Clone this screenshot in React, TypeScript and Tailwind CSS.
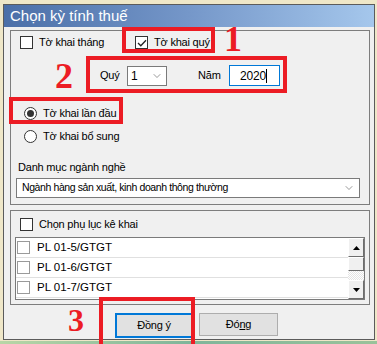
import { ChevronDown } from 'lucide-react';

const font = { fontFamily: '"Liberation Sans", Arial, sans-serif' };
const serif = { fontFamily: '"Liberation Serif", "Times New Roman", serif' };

function CheckBox({ checked = false, soft = false }: { checked?: boolean; soft?: boolean }) {
  return (
    <span
      className={`flex h-[13px] w-[13px] shrink-0 items-center justify-center bg-white border ${
        soft ? 'border-[#9a9a9a]' : 'border-[#333333]'
      }`}
    >
      {checked && (
        <svg width="10" height="8" viewBox="0 0 10 8">
          <path d="M1 4 L3.8 6.8 L9 1.2" fill="none" stroke="#222" strokeWidth="1.3" />
        </svg>
      )}
    </span>
  );
}

function Radio({ checked = false }: { checked?: boolean }) {
  return (
    <span className="flex h-[13px] w-[13px] shrink-0 items-center justify-center rounded-full border border-[#333333] bg-white">
      {checked && <span className="h-[7px] w-[7px] rounded-full bg-[#333333]" />}
    </span>
  );
}

function ScrollBtn({ up }: { up?: boolean }) {
  return (
    <div className="flex h-[19px] w-[16px] items-center justify-center border border-t-white border-l-white border-r-[#6d6d6d] border-b-[#6d6d6d] bg-[#f0f0f0]">
      <svg width="7" height="4" viewBox="0 0 7 4">
        <path d={up ? 'M0 4 L3.5 0 L7 4 Z' : 'M0 0 L3.5 4 L7 0 Z'} fill="#000" />
      </svg>
    </div>
  );
}

const rows = ['PL 01-5/GTGT', 'PL 01-6/GTGT', 'PL 01-7/GTGT'];

export default function App() {
  return (
    <div className="relative flex h-[344px] w-[377px] flex-col overflow-hidden bg-[#efe7c8] text-[11px] tracking-[-0.2px] text-black" style={font}>
      <div className="ml-[3px] mt-[4px] flex h-[337px] w-[372px] flex-col border border-[#5b5b5b] bg-[#f0f0f0]">
        {/* title */}
        <div className="flex h-[22px] items-center bg-gradient-to-r from-[#4b6fa8] via-[#7597c9] to-[#a5c7ec] pl-[6px] text-[15px] tracking-normal text-white">
          Chọn kỳ tính thuế
        </div>

        {/* group 1 */}
        <div className="ml-[6px] mt-[3px] flex h-[175px] w-[360px] flex-col border border-[#7d7d7d]">
          <div className="mt-[5px] flex h-[13px] items-center pl-[9px]">
            <div className="flex w-[115px] items-center gap-[6px]">
              <CheckBox />
              <span>Tờ khai tháng</span>
            </div>
            <div className="flex items-center gap-[6px]">
              <CheckBox checked />
              <span>Tờ khai quý</span>
            </div>
          </div>

          <div className="mt-[16px] flex h-[21px] items-center pl-[89px]">
            <span className="w-[27px]">Quý</span>
            <div className="flex h-[20px] w-[40px] items-center justify-between border border-[#7a7a7a] bg-white pl-[3px] pr-[3px]">
              <span className="text-[12px]">1</span>
              <ChevronDown size={12} strokeWidth={1.2} color="#555" />
            </div>
            <span className="ml-[31px] w-[31px]">Năm</span>
            <div className="flex h-[21px] w-[51px] items-center justify-end border border-[#0078d7] bg-white pr-[12px] text-[12px]">
              2020<span className="h-[14px] w-px bg-black" />
            </div>
          </div>

          <div className="mt-[21px] flex h-[13px] items-center gap-[6px] pl-[13px]">
            <Radio checked />
            <span>Tờ khai lần đầu</span>
          </div>
          <div className="mt-[10px] flex h-[13px] items-center gap-[6px] pl-[13px]">
            <Radio />
            <span>Tờ khai bổ sung</span>
          </div>

          <div className="mt-[16px] h-[14px] pl-[7px]">Danh mục ngành nghề</div>
          <div className="ml-[5px] mt-[5px] flex h-[20px] w-[344px] items-center justify-between border border-[#7a7a7a] bg-white pl-[5px] pr-[4px]">
            <span className="text-[10.5px] tracking-[-0.4px]">Ngành hàng sản xuất, kinh doanh thông thường</span>
            <ChevronDown size={12} strokeWidth={1.2} color="#555" />
          </div>
        </div>

        {/* group 2 */}
        <div className="ml-[6px] mt-[5px] flex h-[95px] w-[360px] flex-col border border-[#7d7d7d]">
          <div className="mt-[7px] flex h-[13px] items-center gap-[6px] pl-[9px]">
            <CheckBox />
            <span>Chọn phụ lục kê khai</span>
          </div>
          <div className="ml-[4px] mt-[6px] flex h-[63px] w-[350px] border border-[#7a7a7a] bg-white">
            <div className="flex flex-1 flex-col">
              {rows.map((r) => (
                <div key={r} className="flex h-[20px] items-center gap-[7px] border-b border-[#e0e0e0] pl-[1px]">
                  <CheckBox soft />
                  <span className="text-[11.5px] tracking-normal">{r}</span>
                </div>
              ))}
            </div>
            <div className="flex w-[16px] flex-col">
              <ScrollBtn up />
              <div className="h-[14px] border border-t-white border-l-white border-r-[#6d6d6d] border-b-[#6d6d6d] bg-[#f0f0f0]" />
              <div
                className="flex-1"
                style={{
                  backgroundImage: 'repeating-conic-gradient(#e4e4e4 0% 25%, #ffffff 0% 50%)',
                  backgroundSize: '2px 2px',
                }}
              />
              <ScrollBtn />
            </div>
          </div>
        </div>

        {/* buttons */}
        <div className="mt-[8px] flex items-start pl-[111px]">
          <button className="flex h-[25px] w-[78px] items-center justify-center border border-[#0078d7] bg-[#e1e1e1] outline outline-1 -outline-offset-2 outline-[#0078d7]">
            Đồng ý
          </button>
          <button className="ml-[6px] flex h-[23px] w-[79px] items-center justify-center border border-[#adadad] bg-[#e1e1e1]">
            Đó<span className="underline">n</span>g
          </button>
        </div>
      </div>
      <div className="mt-[1px] h-[3px] w-full bg-gradient-to-r from-[#b9d6a6] via-[#7fb59a] to-[#9ac29a]" />

      {/* annotations */}
      <div className="absolute left-[122px] top-[27px] h-[26px] w-[93px] border-4 border-[#ec1c24]" />
      <div className="absolute left-[86px] top-[56px] h-[37px] w-[201px] border-4 border-[#ec1c24]" />
      <div className="absolute left-[9px] top-[97px] h-[27px] w-[114px] border-4 border-[#ec1c24]" />
      <div className="absolute left-[99px] top-[297px] h-[60px] w-[96px] border-4 border-[#ec1c24]" />
      <span className="absolute left-[224px] top-[21px] text-[36px] font-bold leading-none tracking-normal text-[#ec1c24]" style={serif}>1</span>
      <span className="absolute left-[55px] top-[58px] text-[36px] font-bold leading-none tracking-normal text-[#ec1c24]" style={serif}>2</span>
      <span className="absolute left-[68px] top-[304px] text-[32px] font-bold leading-none tracking-normal text-[#ec1c24]" style={serif}>3</span>
    </div>
  );
}
